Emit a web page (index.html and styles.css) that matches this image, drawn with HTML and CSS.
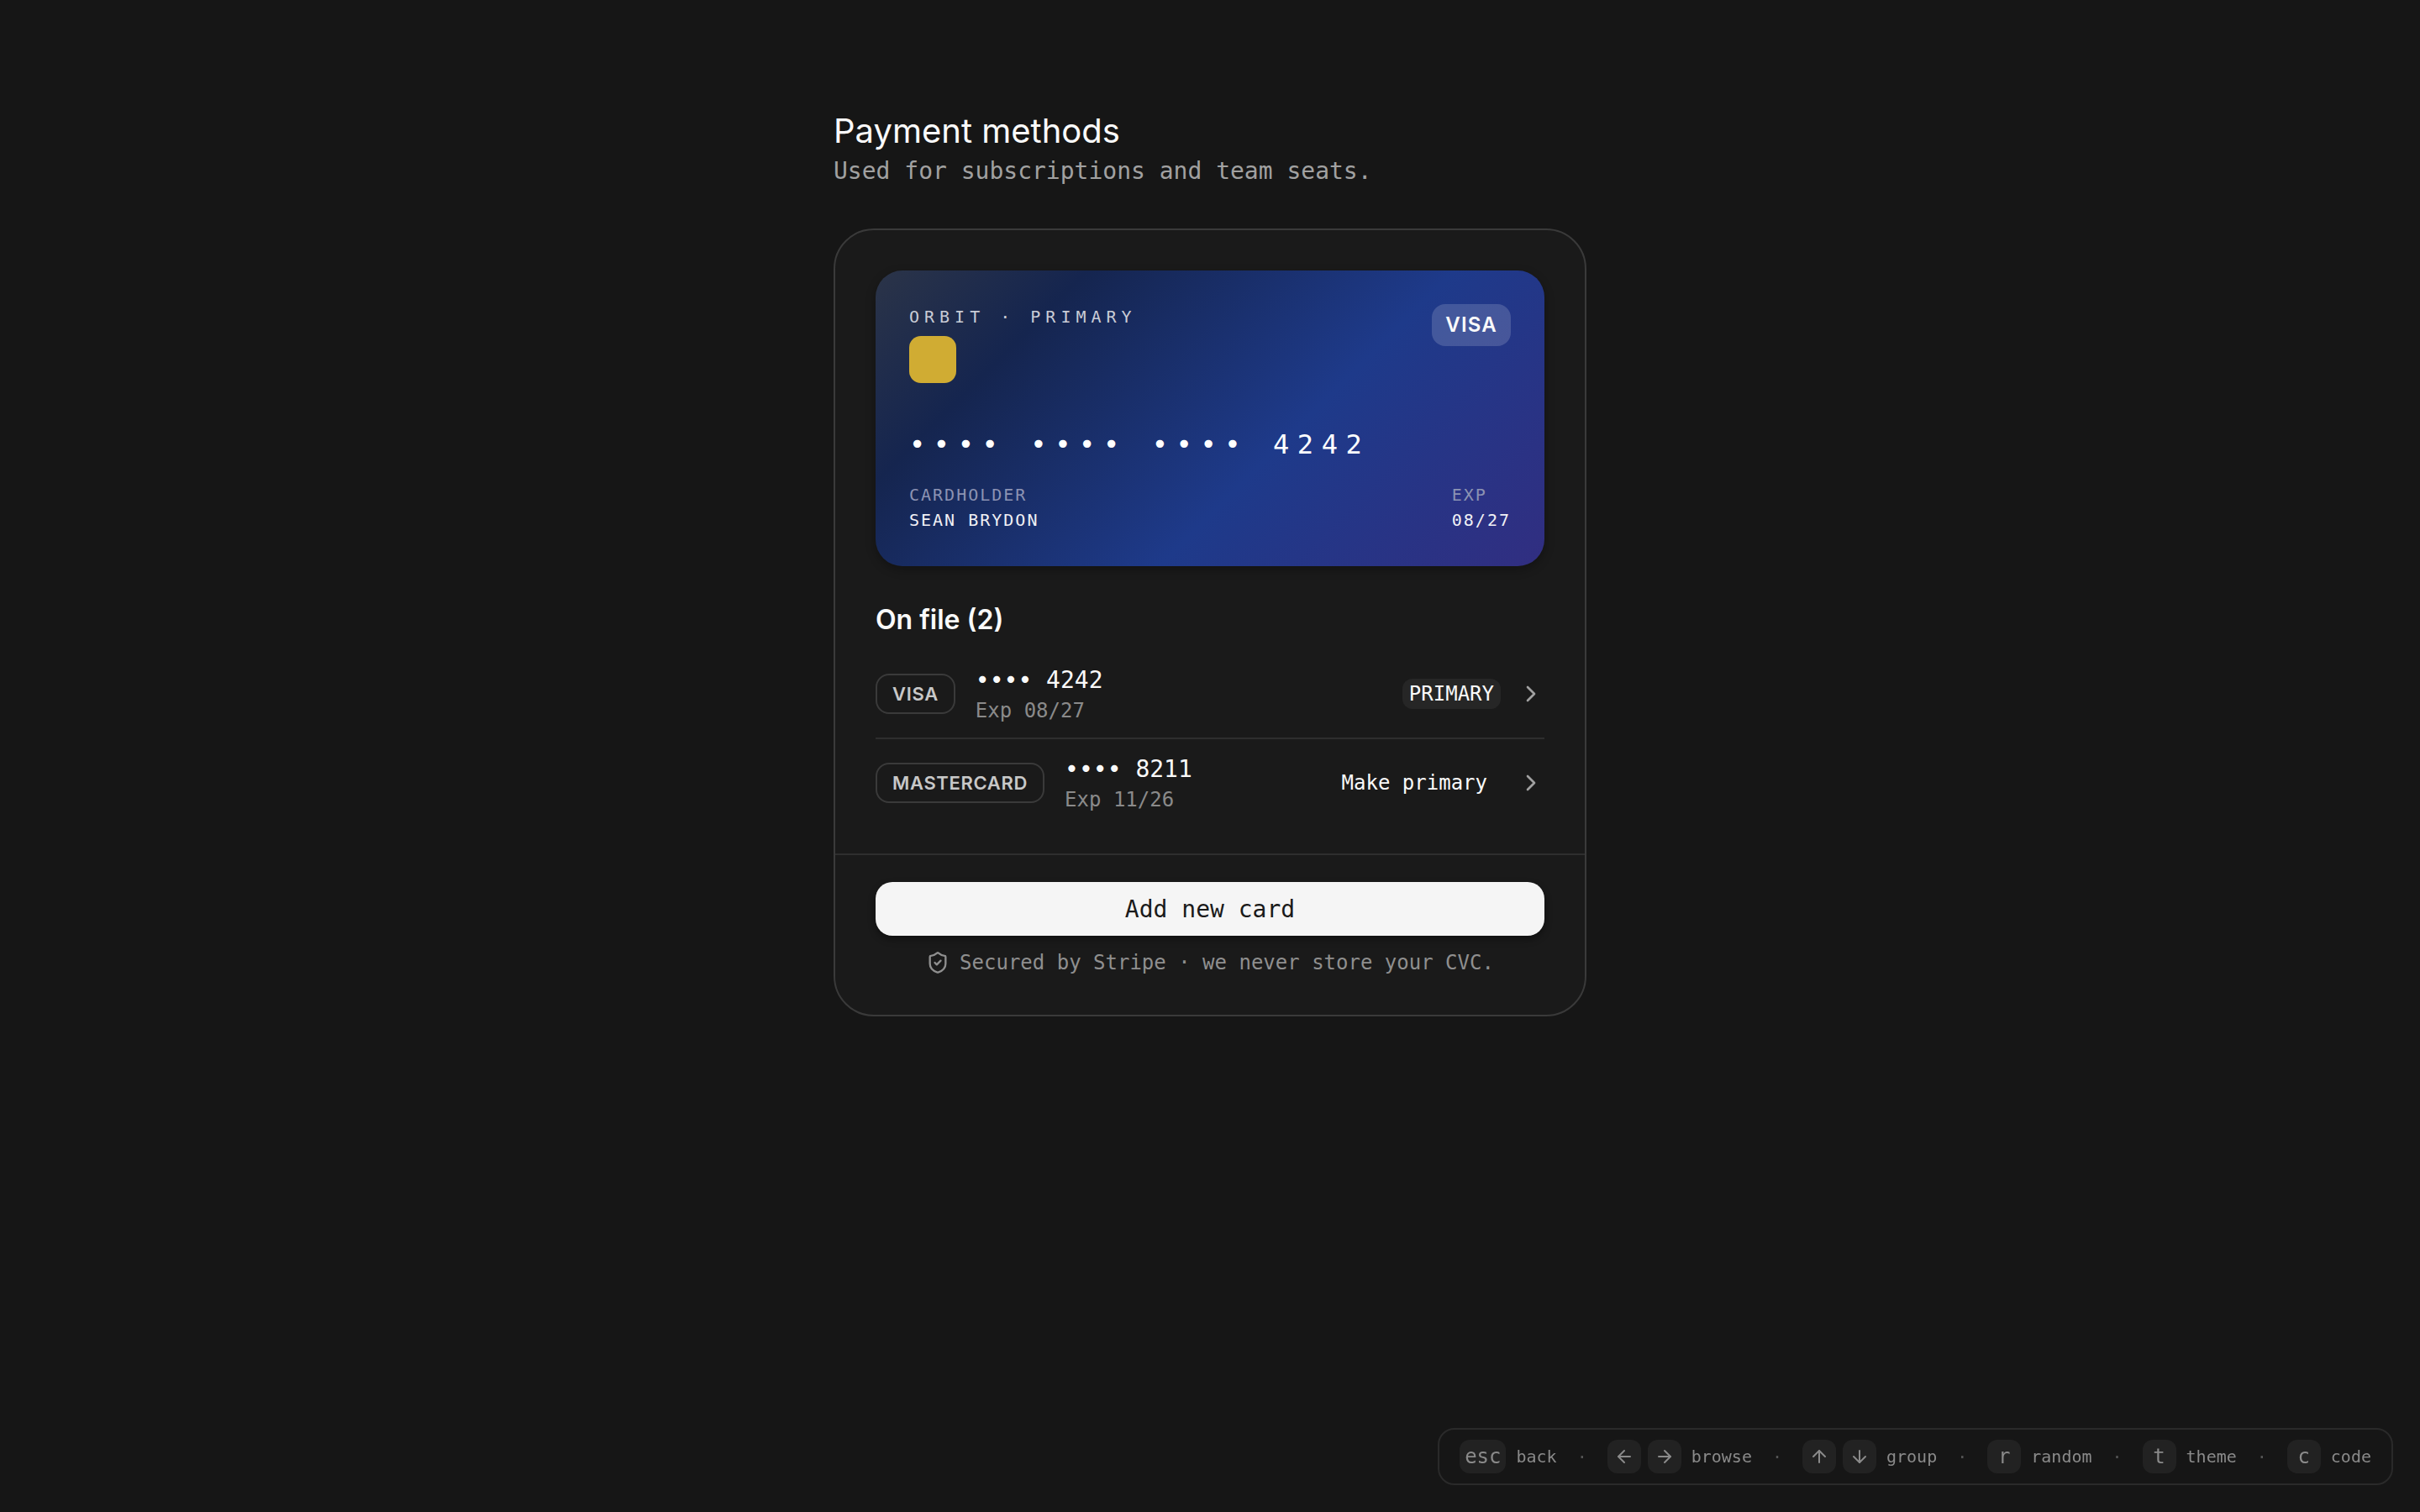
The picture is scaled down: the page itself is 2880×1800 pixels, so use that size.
FILE: index.html
```html
<!DOCTYPE html>
<html lang="en">
<head>
    <meta charset="UTF-8">
    <meta name="viewport" content="width=device-width, initial-scale=1.0">
    <title>Payment methods</title>
    <link rel="stylesheet" href="styles.css">
</head>
<body>
    <main class="page">
        <h1 class="title">Payment methods</h1>
        <p class="subtitle">Used for subscriptions and team seats.</p>

        <section class="panel">
            <div class="panel-body">
                <div class="credit-card">
                    <div class="cc-top">
                        <div>
                            <div class="cc-brand">ORBIT · PRIMARY</div>
                            <div class="cc-chip"></div>
                        </div>
                        <div class="cc-network">VISA</div>
                    </div>
                    <div class="cc-number">•••• •••• •••• 4242</div>
                    <div class="cc-bottom">
                        <div>
                            <div class="cc-label">CARDHOLDER</div>
                            <div class="cc-value">SEAN BRYDON</div>
                        </div>
                        <div>
                            <div class="cc-label">EXP</div>
                            <div class="cc-value">08/27</div>
                        </div>
                    </div>
                </div>

                <h2 class="list-title">On file (2)</h2>
                <div class="method-row">
                    <span class="method-badge">VISA</span>
                    <div class="method-info">
                        <div class="method-number">•••• 4242</div>
                        <div class="method-exp">Exp 08/27</div>
                    </div>
                    <span class="primary-tag">PRIMARY</span>
                    <svg class="chevron" viewBox="0 0 24 24"><path d="m9 18 6-6-6-6"/></svg>
                </div>
                <div class="method-row">
                    <span class="method-badge">MASTERCARD</span>
                    <div class="method-info">
                        <div class="method-number">•••• 8211</div>
                        <div class="method-exp">Exp 11/26</div>
                    </div>
                    <button class="make-primary">Make primary</button>
                    <svg class="chevron" viewBox="0 0 24 24"><path d="m9 18 6-6-6-6"/></svg>
                </div>
            </div>
            <div class="panel-footer">
                <button class="add-button">Add new card</button>
                <p class="secure-note">
                    <svg class="shield" viewBox="0 0 24 24"><path d="M20 13c0 5-3.5 7.5-7.66 8.95a1 1 0 0 1-.67-.01C7.5 20.5 4 18 4 13V6a1 1 0 0 1 1-1c2 0 4.5-1.2 6.24-2.72a1.17 1.17 0 0 1 1.52 0C14.51 3.81 17 5 19 5a1 1 0 0 1 1 1z"/><path d="m9 12 2 2 4-4"/></svg>
                    Secured by Stripe · we never store your CVC.
                </p>
            </div>
        </section>
    </main>

    <div class="shortcuts">
        <kbd class="key">esc</kbd><span class="key-label">back</span>
        <span class="key-sep">·</span>
        <kbd class="key"><svg viewBox="0 0 24 24"><path d="m12 19-7-7 7-7"/><path d="M19 12H5"/></svg></kbd>
        <kbd class="key"><svg viewBox="0 0 24 24"><path d="M5 12h14"/><path d="m12 5 7 7-7 7"/></svg></kbd><span class="key-label">browse</span>
        <span class="key-sep">·</span>
        <kbd class="key"><svg viewBox="0 0 24 24"><path d="m5 12 7-7 7 7"/><path d="M12 19V5"/></svg></kbd>
        <kbd class="key"><svg viewBox="0 0 24 24"><path d="M12 5v14"/><path d="m19 12-7 7-7-7"/></svg></kbd><span class="key-label">group</span>
        <span class="key-sep">·</span>
        <kbd class="key">r</kbd><span class="key-label">random</span>
        <span class="key-sep">·</span>
        <kbd class="key">t</kbd><span class="key-label">theme</span>
        <span class="key-sep">·</span>
        <kbd class="key">c</kbd><span class="key-label">code</span>
    </div>
</body>
</html>
```

FILE: styles.css
```css
* {
    box-sizing: border-box;
}
body {
    margin: 0;
    height: 100vh;
    overflow: hidden;
    background: #161616;
    color: #fafafa;
    font-family: 'DejaVu Sans Mono', monospace;
}
.page {
    width: 896px;
    margin: 0 auto;
    padding-top: 128px;
}
.title {
    margin: 0;
    font-family: 'Inter', sans-serif;
    font-size: 40px;
    line-height: 56px;
    font-weight: 400;
}
.subtitle {
    margin: 0 0 48px;
    font-size: 28px;
    line-height: 40px;
    color: #a1a1a1;
}
.panel {
    background: #1a1a1a;
    border: 2px solid #3a3a3a;
    border-radius: 48px;
}
.panel-body {
    padding: 48px 48px 32px;
}
.credit-card {
    height: 352px;
    padding: 40px;
    border-radius: 32px;
    background: linear-gradient(135deg, #2b3448 0%, #15254f 22%, #1e3a8a 60%, #312e81 100%);
    box-shadow: 0 4px 12px rgba(0, 0, 0, 0.3);
}
.cc-top {
    display: flex;
    justify-content: space-between;
    align-items: flex-start;
}
.cc-brand {
    font-size: 20px;
    line-height: 30px;
    letter-spacing: 0.3em;
    color: #c9ccd6;
}
.cc-chip {
    width: 56px;
    height: 56px;
    margin-top: 8px;
    border-radius: 14px;
    background: #d0ac33;
}
.cc-network {
    padding: 10px 16px;
    border-radius: 16px;
    background: rgba(255, 255, 255, 0.16);
    font-family: 'Inter', sans-serif;
    font-size: 24px;
    line-height: 30px;
    font-weight: 600;
    letter-spacing: 0.05em;
}
.cc-number {
    margin-top: 49px;
    font-size: 32px;
    line-height: 48px;
    letter-spacing: 0.3em;
    color: #ffffff;
}
.cc-bottom {
    display: flex;
    justify-content: space-between;
    margin-top: 21px;
}
.cc-label,
.cc-value {
    font-size: 20px;
    line-height: 30px;
    letter-spacing: 0.1em;
}
.cc-label {
    color: #8c93b3;
}
.cc-value {
    color: #f0f0f5;
}
.list-title {
    margin: 44px 0 16px;
    font-family: 'Inter', sans-serif;
    font-size: 32px;
    line-height: 40px;
    font-weight: 600;
}
.method-row {
    display: flex;
    align-items: center;
    gap: 24px;
    padding: 16px 0;
}
.method-row + .method-row {
    border-top: 2px solid #2e2e2e;
}
.method-badge {
    padding: 0 18px;
    height: 48px;
    display: flex;
    align-items: center;
    border: 2px solid #3a3a3a;
    border-radius: 16px;
    font-family: 'Inter', sans-serif;
    font-size: 22px;
    font-weight: 600;
    letter-spacing: 0.03em;
    color: #c8c8c8;
}
.method-info {
    flex: 1;
}
.method-number {
    font-size: 28px;
    line-height: 40px;
}
.method-exp {
    font-size: 24px;
    line-height: 32px;
    color: #8a8a8a;
}
.primary-tag {
    padding: 2px 8px;
    border-radius: 12px;
    background: #262626;
    font-size: 24px;
    line-height: 32px;
}
.make-primary {
    padding: 0 16px;
    border: none;
    background: none;
    color: #fafafa;
    font-family: inherit;
    font-size: 24px;
    line-height: 32px;
}
.chevron {
    width: 32px;
    height: 32px;
    margin-left: -4px;
    fill: none;
    stroke: #a1a1a1;
    stroke-width: 2;
    stroke-linecap: round;
    stroke-linejoin: round;
}
.panel-footer {
    padding: 32px 48px 46px;
    border-top: 2px solid #2e2e2e;
}
.add-button {
    display: block;
    width: 100%;
    height: 64px;
    border: none;
    border-radius: 20px;
    background: #f5f5f5;
    color: #1a1a1a;
    font-family: inherit;
    font-size: 28px;
    box-shadow: 0 4px 8px rgba(0, 0, 0, 0.4);
}
.secure-note {
    display: flex;
    justify-content: center;
    align-items: center;
    gap: 12px;
    margin: 16px 0 0;
    font-size: 24px;
    line-height: 32px;
    color: #8f8f8f;
}
.shield {
    width: 28px;
    height: 28px;
    fill: none;
    stroke: currentColor;
    stroke-width: 2;
    stroke-linecap: round;
    stroke-linejoin: round;
}
.shortcuts {
    position: fixed;
    right: 32px;
    bottom: 32px;
    display: flex;
    align-items: center;
    padding: 12px 24px;
    border: 2px solid #2a2a2a;
    border-radius: 20px;
    font-size: 20px;
    color: #8a8a8a;
}
.key {
    min-width: 40px;
    height: 40px;
    display: flex;
    align-items: center;
    justify-content: center;
    padding: 0 6px;
    border-radius: 12px;
    background: #222222;
    font-family: inherit;
    font-size: 24px;
}
.key + .key {
    margin-left: 8px;
}
.key svg {
    width: 24px;
    height: 24px;
    fill: none;
    stroke: currentColor;
    stroke-width: 2;
    stroke-linecap: round;
    stroke-linejoin: round;
}
.key-label {
    margin-left: 12px;
}
.key-sep {
    margin: 0 24px;
    color: #555555;
}
```
